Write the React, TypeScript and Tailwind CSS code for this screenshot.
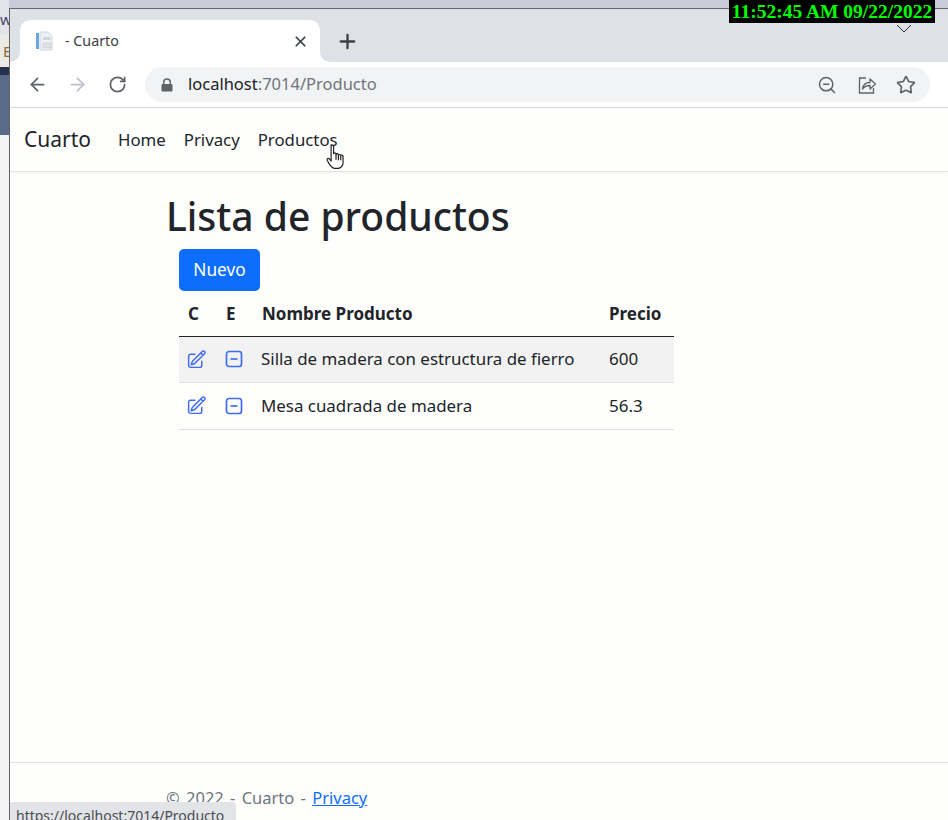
import { ArrowLeft, ArrowRight, RotateCw, X, Plus, ZoomOut, Star } from "lucide-react";
import { HiOutlinePencilSquare } from "react-icons/hi2";

const font = "font-['Noto_Sans','Open_Sans',sans-serif]";

const LockIcon = () => (
    <svg width="12" height="14" viewBox="0 0 12 14" fill="#5f6368">
        <path d="M2 6V4.2a4 4 0 0 1 8 0V6h.6c.5 0 .9.4.9.9v5.7c0 .5-.4.9-.9.9H1.4c-.5 0-.9-.4-.9-.9V6.900c0-.5.4-.9.9-.9zm1.500 0h5V4.200a2.500 2.500 0 0 0-5 0z" />
    </svg>
);

const ShareIcon = () => (
    <svg width="20" height="20" viewBox="0 0 20 20" fill="none" stroke="#5f6368" strokeWidth="1.300">
        <path d="M9 3H2.500v15h14v-5" />
        <path d="M5.500 14c.6-4 3.500-6.500 7.500-6.500V4l5.500 5-5.500 5v-3.500c-3 0-5.500 1-7.500 3.500z" strokeLinejoin="round" />
    </svg>
);

const Favicon = () => (
    <svg width="20" height="20" viewBox="0 0 20 20">
        <rect x="1" y="2" width="3" height="16" fill="#6aa9e4" />
        <path d="M5 1h8l4 4v14H5z" fill="#eef1f4" stroke="#cfd5dc" />
        <rect x="8" y="6" width="7" height="3" fill="#cfd5dc" />
        <rect x="8" y="12" width="8" height="5" fill="#dbe0e6" stroke="#c2c8d0" strokeWidth=".5" />
    </svg>
);

const HandCursor = () => (
    <svg width="20" height="26" viewBox="0 0 18 24" fill="#fff" stroke="#222" strokeWidth="1.100" strokeLinejoin="round">
        <path d="M4.500 2c0-1.400 2.300-1.400 2.300 0v7c0-1.200 2.200-1.200 2.200 0v.8c0-1.200 2.200-1.200 2.200 0v.8c0-1.200 2.200-1.200 2.200 0 0-.4 2.100-.6 2.100.9v5.500c0 2.500-1.500 4.500-4 5.500H7.500C5 22 2.500 18.500.9 15c-.6-1.500 1-2.400 2-1.200l1.600 2z" />
        <path d="M9 9.500v5M11.200 10.500v4.500M13.400 11v4" fill="none" />
    </svg>
);

const MinusSquare = () => (
    <svg width="20" height="20" viewBox="0 0 20 20" fill="none" stroke="#3f6df2" strokeWidth="1.700">
        <rect x="2.500" y="2.500" width="15" height="15" rx="2.500" />
        <path d="M6.500 10h7" />
    </svg>
);

const productos = [
    { nombre: "Silla de madera con estructura de fierro", precio: "600" },
    { nombre: "Mesa cuadrada de madera", precio: "56.3" },
];

export default function App() {
    return (
        <div className={`relative h-[820px] w-[948px] overflow-hidden bg-[#c9ccd8] ${font}`}>
            {/* desktop behind the window */}
            <div className="flex h-full">
                <div className="flex w-[9px] flex-col overflow-hidden text-[15px] leading-none">
                    <div className="h-[35px] bg-[#e3e4ea] pt-[12px] text-[#3c4a68]">w</div>
                    <div className="h-[32px] bg-[#eceae6] pl-[3px] pt-[9px] text-[#8a6a3a]">E</div>
                    <div className="h-[8px] bg-[#23304f]" />
                    <div className="h-[60px] bg-[#5a6b8a]" />
                    <div className="flex-1 bg-[#f3f3f3]" />
                </div>
                <div className="flex flex-1 flex-col pt-[8px]">
                    <div className="flex flex-1 flex-col border-l border-t border-[#666] bg-[#fefefd]">
                        {/* tab strip */}
                        <div className="flex h-[53px] shrink-0 items-end bg-[#dee1e6] pl-[10px]">
                            <div className="relative flex h-[42px] w-[300px] items-center rounded-t-[10px] bg-white pl-[15px] pr-[11px]">
                                <svg className="absolute bottom-0 left-[-10px]" width="10" height="10" viewBox="0 0 10 10" fill="#fff">
                                    <path d="M10 0v10H0A10 10 0 0 0 10 0z" />
                                </svg>
                                <svg className="absolute bottom-0 right-[-10px]" width="10" height="10" viewBox="0 0 10 10" fill="#fff">
                                    <path d="M0 0v10h10A10 10 0 0 1 0 0z" />
                                </svg>
                                <Favicon />
                                <span className="ml-[10px] flex-1 text-[14.300px] text-[#3c4043]">- Cuarto</span>
                                <X size={17} strokeWidth={2.400} color="#3c4043" />
                            </div>
                            <div className="ml-[16px] flex h-[42px] items-center">
                                <Plus size={23} strokeWidth={2.400} color="#3c4043" />
                            </div>
                        </div>
                        {/* toolbar */}
                        <div className="flex h-[46px] shrink-0 items-center border-b border-[#dadce0] bg-white pl-[17px] pr-[18px]">
                            <ArrowLeft size={21} color="#5f6368" strokeWidth={2} />
                            <ArrowRight size={21} color="#bdbfc9" strokeWidth={2} className="ml-[19px]" />
                            <RotateCw size={19} color="#5f6368" strokeWidth={2.200} className="ml-[20px]" />
                            <div className="ml-[18px] flex h-[35px] flex-1 items-center rounded-full bg-[#f1f3f4] pl-[16px] pr-[14px]">
                                <LockIcon />
                                <span className="ml-[15px] flex-1 text-[16.500px] text-[#70757a]">
                                    <span className="text-[#202124]">localhost</span>:7014/Producto
                                </span>
                                <ZoomOut size={20} color="#5f6368" strokeWidth={1.800} />
                                <span className="ml-[20px]"><ShareIcon /></span>
                                <Star size={20} color="#5f6368" strokeWidth={2} className="ml-[19px]" />
                            </div>
                        </div>
                        {/* navbar */}
                        <nav className="flex h-[64px] shrink-0 items-center border-b border-[#e3e3e3] bg-[#fefefd] pl-[14px] text-[#212529] shadow-[0_1px_3px_rgba(0,0,0,0.05)]">
                            <span className="text-[21px]">Cuarto</span>
                            <span className="ml-[27px] text-[16.800px]">Home</span>
                            <span className="ml-[18px] text-[16.800px]">Privacy</span>
                            <span className="ml-[18px] text-[16.800px]">Productos</span>
                        </nav>
                        {/* main */}
                        <main className="flex-1 pl-[156px] pt-[16px] text-[#212529]">
                            <h1 className="text-[39px] font-medium leading-[56px]">Lista de productos</h1>
                            <div className="pl-[13px]">
                                <button className="mt-[5px] h-[42px] w-[81px] rounded-[5px] bg-[#0d6efd] pb-[1px] text-[17.300px] text-white">Nuevo</button>
                                <table className="w-[495px] table-fixed text-[17px]">
                                    <colgroup>
                                        <col className="w-[38px]" />
                                        <col className="w-[37px]" />
                                        <col className="w-[347px]" />
                                        <col className="w-[73px]" />
                                    </colgroup>
                                    <thead>
                                        <tr className="h-[45px] border-b border-[#212529] text-left">
                                            <th className="pl-[9px] font-bold">C</th>
                                            <th className="pl-[9px] font-bold">E</th>
                                            <th className="pl-[8px] font-bold">Nombre Producto</th>
                                            <th className="pl-[8px] font-bold">Precio</th>
                                        </tr>
                                    </thead>
                                    <tbody>
                                        {productos.map((producto, index) => (
                                            <tr key={"producto-" + index} className={`border-b border-[#dee2e6] ${index == 0 ? "h-[46px] bg-[#f2f2f2]" : "h-[47px]"}`}>
                                                <td className="pl-[7px]"><HiOutlinePencilSquare size={21} color="#3f6df2" strokeWidth={1.700} /></td>
                                                <td className="pl-[7px]"><MinusSquare /></td>
                                                <td className="pl-[7px] text-[16.900px]">{producto.nombre}</td>
                                                <td className="pl-[8px]">{producto.precio}</td>
                                            </tr>
                                        ))}
                                    </tbody>
                                </table>
                            </div>
                        </main>
                        {/* footer */}
                        <footer className="h-[58px] shrink-0 border-t border-[#dee2e6] pl-[156px] pt-[23px] text-[16.500px] text-[#6c757d] [word-spacing:2px]">
                            © 2022 - Cuarto - <a className="text-[#0d6efd] underline">Privacy</a>
                        </footer>
                    </div>
                </div>
            </div>

            {/* overlays */}
            <div className="absolute right-[13px] top-0 flex h-[23px] w-[206px] items-center justify-center whitespace-nowrap bg-black font-['Liberation_Serif',serif] text-[19.500px] font-bold text-[#00ff00]">
                11:52:45 AM 09/22/2022
            </div>
            <svg className="absolute left-[896px] top-[24px]" width="16" height="9" viewBox="0 0 16 9" fill="none" stroke="#333" strokeWidth="1">
                <path d="M1 1l7 7 7-7" />
            </svg>
            <div className="absolute left-[326px] top-[144px]"><HandCursor /></div>
            <div className="absolute bottom-0 left-[10px] h-[18px] w-[226px] overflow-hidden rounded-tr-[3px] bg-[#e3e4e8] pl-[6px] text-[14px] leading-[27px] text-[#4a4d52]">
                https://localhost:7014/Producto
            </div>
        </div>
    );
}
